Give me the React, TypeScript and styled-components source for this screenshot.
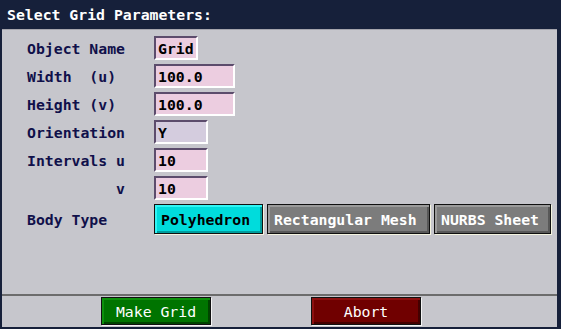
import styled, { createGlobalStyle } from "styled-components";

const GlobalStyle = createGlobalStyle`
  html, body {
    margin: 0;
    padding: 0;
    background: #16203a;
  }
  * {
    box-sizing: border-box;
  }
`;

type FieldProps = {
  $width: number;
  $tone?: "pink" | "grey";
};

type ChoiceProps = {
  $active?: boolean;
  $width: number;
};

type ActionProps = {
  $kind: "go" | "stop";
};

const rows = [
  { label: "Object Name", value: "Grid", width: 44 },
  { label: "Width  (u)", value: "100.0", width: 81 },
  { label: "Height (v)", value: "100.0", width: 81 },
  { label: "Orientation", value: "Y", width: 54, tone: "grey" as const },
  { label: "Intervals u", value: "10", width: 54 },
  { label: "          v", value: "10", width: 54 },
];

const bodyTypes = [
  { name: "Polyhedron", width: 109 },
  { name: "Rectangular Mesh", width: 163 },
  { name: "NURBS Sheet", width: 117 },
];

function App() {
  return (
    <>
      <GlobalStyle />
      <Window>
        <TitleBar>Select Grid Parameters:</TitleBar>
        <Panel>
          <Form>
            {rows.map((row) => (
              <Row key={row.label}>
                <Label>{row.label}</Label>
                <Field $width={row.width} $tone={row.tone}>
                  {row.value}
                </Field>
              </Row>
            ))}
            <Row>
              <Label>Body Type</Label>
              <Choices>
                {bodyTypes.map((type, i) => (
                  <Choice key={type.name} $active={i === 0} $width={type.width}>
                    {type.name}
                  </Choice>
                ))}
              </Choices>
            </Row>
          </Form>
          <Footer>
            <Action $kind="go">Make Grid</Action>
            <Action $kind="stop">Abort</Action>
          </Footer>
        </Panel>
      </Window>
    </>
  );
}

const Window = styled.div`
  width: 561px;
  height: 329px;
  display: flex;
  flex-direction: column;
  background: #16203a;
  font-family: "DejaVu Sans Mono", "Liberation Mono", monospace;
  font-size: 14.8px;
  font-weight: bold;
`;

const TitleBar = styled.div`
  height: 29px;
  display: flex;
  align-items: center;
  padding-left: 7px;
  color: #ffffff;
  white-space: pre;
`;

const Panel = styled.div`
  flex: 1;
  margin: 0 4px 2px 2px;
  display: flex;
  flex-direction: column;
  background: #c6c6cc;
  border-top: 1px solid #a4a4ac;
`;

const Form = styled.div`
  flex: 1;
  display: flex;
  flex-direction: column;
  gap: 4px;
  padding: 6px 0 0 25px;
`;

const Row = styled.div`
  display: flex;
  align-items: center;
  min-height: 24px;
`;

const Label = styled.span`
  width: 127px;
  color: #10104a;
  white-space: pre;
`;

const Field = styled.div<FieldProps>`
  width: ${(props) => props.$width}px;
  height: 24px;
  display: flex;
  align-items: center;
  padding-left: 2px;
  color: #000000;
  border-style: solid;
  border-width: 2px;
  border-color: #5c4c6c #ffffff #ffffff #5c4c6c;
  background: ${(props) => (props.$tone === "grey" ? "#d4ccde" : "#eccde0")};
`;

const Choices = styled.div`
  display: flex;
  gap: 4px;
`;

const Choice = styled.div<ChoiceProps>`
  width: ${(props) => props.$width}px;
  height: 30px;
  display: flex;
  align-items: center;
  padding-left: 6px;
  border: 1px solid #101010;
  color: ${(props) => (props.$active ? "#000000" : "#ffffff")};
  background: ${(props) => (props.$active ? "#00dcdc" : "#7c7c7c")};
  box-shadow:
    1px 1px 0 #f4f4e0,
    inset 2px 2px 0 ${(props) => (props.$active ? "#30f4f4" : "#9a9a9a")},
    inset -2px -2px 0 ${(props) => (props.$active ? "#009c9c" : "#585858")};
`;

const Footer = styled.div`
  height: 33px;
  display: flex;
  align-items: flex-start;
  gap: 100px;
  padding: 1px 0 0 99px;
  border-top: 2px solid #6c6c6c;
`;

const Action = styled.div<ActionProps>`
  width: 110px;
  height: 28px;
  display: flex;
  align-items: center;
  justify-content: center;
  color: #ffffff;
  font-weight: normal;
  border: 1px solid #101010;
  background: ${(props) => (props.$kind === "go" ? "#007400" : "#700000")};
  box-shadow:
    1px 1px 0 #f4f4f4,
    inset 2px 2px 0 ${(props) => (props.$kind === "go" ? "#0c900c" : "#8c1010")},
    inset -2px -2px 0 ${(props) => (props.$kind === "go" ? "#004400" : "#440000")};
`;

export default App;
